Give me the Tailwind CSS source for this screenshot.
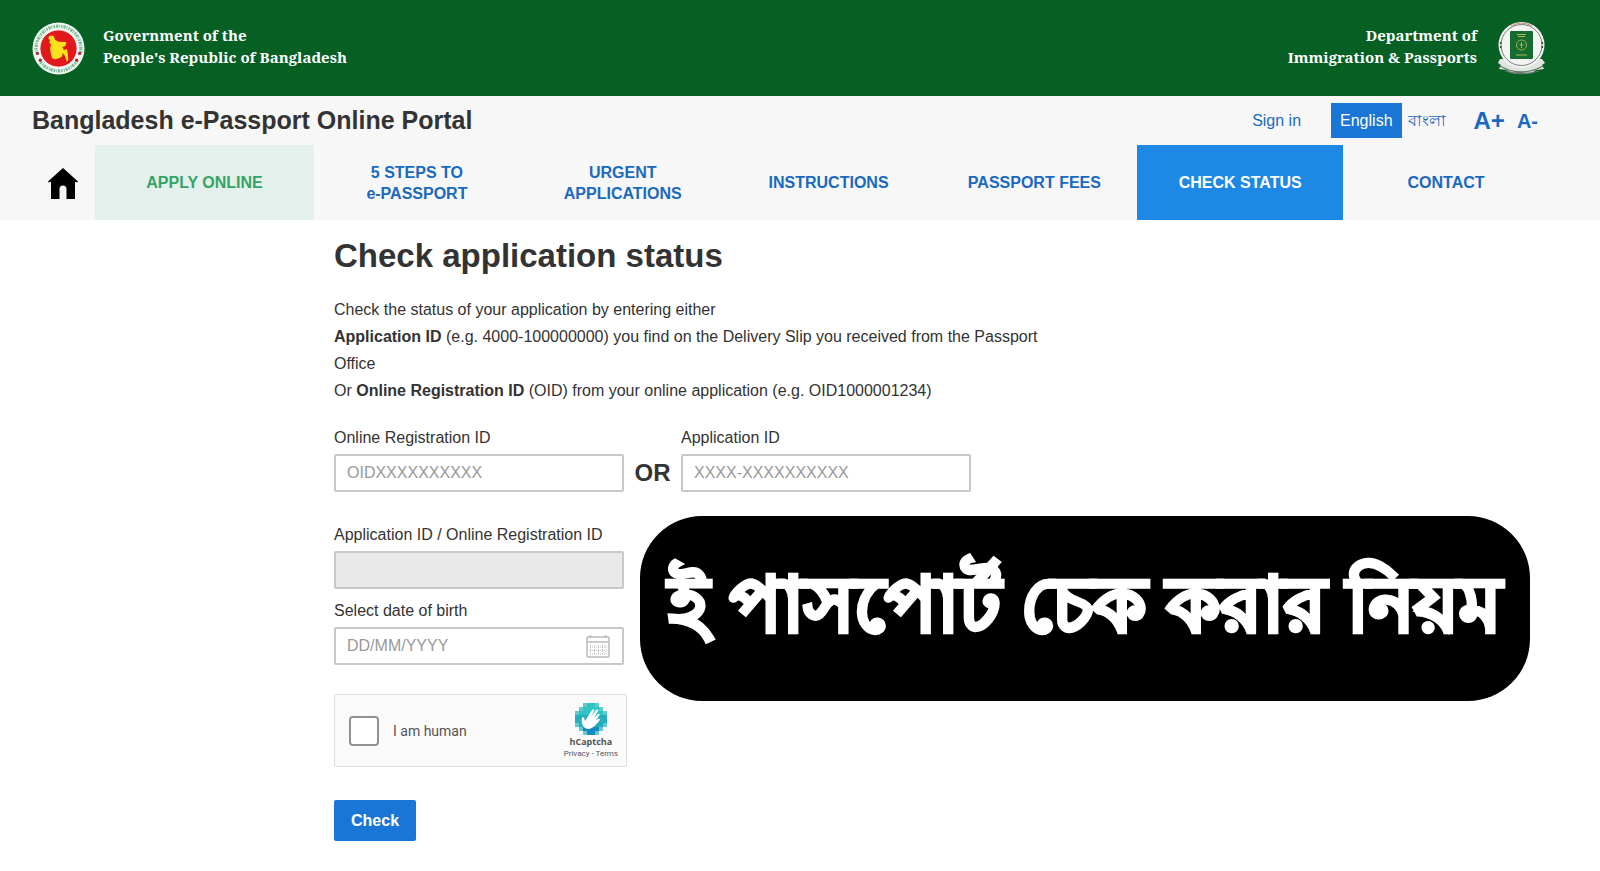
<!DOCTYPE html>
<html lang="en">
<head>
    <meta charset="UTF-8">
    <meta name="viewport" content="width=device-width, initial-scale=1.0">
    <title>Check application status - Bangladesh e-Passport Online Portal</title>
    <script src="https://cdn.jsdelivr.net/npm/@tailwindcss/browser@4"></script>
</head>
<body class="relative min-h-screen bg-white font-['Liberation_Sans',Arial,sans-serif] text-base text-[#333]">
    <!-- Government banner -->
    <header class="flex h-24 items-center justify-between bg-[#066023] pl-8 pr-[54px] font-['Noto_Serif','Liberation_Serif',serif] text-[15px] leading-[22px] font-bold text-white">
        <div class="flex items-center gap-[18px]">
            <svg class="size-[53px]" viewBox="0 0 54 54" aria-hidden="true">
                <circle cx="27" cy="27" r="26.5" fill="#eefaf0" />
                <circle cx="27" cy="27" r="22.8" fill="none" stroke="#3f9467" stroke-width="3.2" stroke-dasharray="1.6 1 2.3 .8 1 1.2" pathLength="144" opacity=".65" />
                <circle cx="27" cy="27" r="19" fill="#e2181d" stroke="#fff" stroke-width="1" />
                <path d="M4 31l4 9M50 31l-4 9" stroke="#eefaf0" stroke-width="5" />
                <g fill="#b8233c">
                    <circle cx="5.500" cy="32" r="1.700" /><circle cx="8.500" cy="39" r="1.700" />
                    <circle cx="48.500" cy="32" r="1.700" /><circle cx="45.500" cy="39" r="1.700" />
                </g>
                <path d="M18 14l4 0 1.500 4 3.500 2 8 .5-1 4-3 1 1.500 3 3-1 1 5 .5 6-1.500 2-2-6-2-3-1 4-3 1.500-4 1-3-1-1.500-6-.5-4.500 1-3-2-3 1-2-2-2z" fill="#fbe21c" />
            </svg>
            <p class="pb-1">Government of the<br>People's Republic of Bangladesh</p>
        </div>
        <div class="flex items-center gap-5 text-right">
            <p class="pb-1">Department of<br>Immigration &amp; Passports</p>
            <svg class="h-[54px] w-[49px]" viewBox="0 0 49 54" aria-hidden="true">
                <path d="M3 38l-2 4 3 2-2 4 8 1 4 3 10 1 11-1 4-3 8-1-2-4 3-2-3-4z" fill="#dfe5df" />
                <path d="M3 45q21 12 43 0M8 50q17 5 34 0" fill="none" stroke="#66776b" stroke-width="1.300" />
                <circle cx="24.500" cy="24" r="23" fill="#f3f5f3" />
                <circle cx="24.500" cy="24" r="20.500" fill="none" stroke="#777d79" stroke-width="1" />
                <circle cx="24.500" cy="24" r="21.800" fill="none" stroke="#bd6f73" stroke-width=".8" stroke-dasharray="22 115" stroke-dashoffset="46" />
                <g fill="#333"><circle cx="3.700" cy="22" r=".9" /><circle cx="3.700" cy="26" r=".9" /><circle cx="45.300" cy="22" r=".9" /><circle cx="45.300" cy="26" r=".9" /></g>
                <rect x="13" y="10" width="23" height="28" rx="1" fill="#166b2f" />
                <g fill="none" stroke="#a8b958">
                    <path d="M20 13.500h9M21 15.500h7M19 34h11" stroke-width="1" />
                    <circle cx="24.500" cy="24" r="5" stroke-width=".9" />
                    <path d="M24.500 21v6M22.500 23l2 2 2-2" stroke-width="1" />
                </g>
            </svg>
        </div>
    </header>

    <div class="bg-[#f7f7f7]">
        <!-- Title and tools -->
        <div class="flex h-[49px] items-center justify-between pl-8 pr-[62px]">
            <p class="text-[25px] font-bold">Bangladesh e-Passport Online Portal</p>
            <div class="flex items-center text-[#1a69c0]">
                <a href="#" class="mr-[30px]">Sign in</a>
                <a href="#" class="flex h-[35px] items-center bg-[#1976d7] px-[9px] text-white">English</a>
                <a href="#" lang="bn" class="ml-1.5">বাংলা</a>
                <button type="button" class="ml-7 text-2xl font-bold">A+</button>
                <button type="button" class="ml-3 text-xl font-bold">A-</button>
            </div>
        </div>

        <!-- Main navigation -->
        <nav class="flex h-[75px] pr-[51px] text-center text-base leading-[21px] font-bold text-[#1a69c0]">
            <a href="#" aria-label="Home" class="flex w-[95px] items-center justify-end pr-4">
                <svg class="size-8" viewBox="0 0 32 32" fill="#000" aria-hidden="true">
                    <path d="M16 1L1 14.500l1 1 2-1V32h8.500V22q0-3.500 3.500-3.500t3.500 3.500v10H28V14.500l2 1 1-1z" />
                </svg>
            </a>
            <a href="#" class="flex w-[219px] items-center justify-center bg-[#e4f0eb] text-[#34a466]">APPLY ONLINE</a>
            <a href="#" class="flex flex-1 items-center justify-center">5 STEPS TO<br>e-PASSPORT</a>
            <a href="#" class="flex flex-1 items-center justify-center">URGENT<br>APPLICATIONS</a>
            <a href="#" class="flex flex-1 items-center justify-center">INSTRUCTIONS</a>
            <a href="#" class="flex flex-1 items-center justify-center">PASSPORT FEES</a>
            <a href="#" class="flex flex-1 items-center justify-center bg-[#1e88e5] text-white" aria-current="page">CHECK STATUS</a>
            <a href="#" class="flex flex-1 items-center justify-center">CONTACT</a>
        </nav>
    </div>

    <main class="mx-auto max-w-[932px] pt-3">
        <h1 class="text-[33px] leading-[48px] font-bold">Check application status</h1>
        <p class="mt-4 max-w-[740px] leading-[27px]">
            Check the status of your application by entering either<br>
            <b>Application ID</b> (e.g. 4000-100000000) you find on the Delivery Slip you received from the Passport Office<br>
            Or <b>Online Registration ID</b> (OID) from your online application (e.g. OID1000001234)
        </p>

        <form class="mt-[18px]">
            <div class="flex items-end">
                <div class="w-[290px]">
                    <label for="oid" class="block leading-8">Online Registration ID</label>
                    <input type="text" id="oid" placeholder="OIDXXXXXXXXXX" class="block h-[38px] w-full rounded-xs border-2 border-[#c8c8c8] px-[11px] placeholder:text-[#999]">
                </div>
                <span class="w-[57px] text-center text-2xl leading-[38px] font-bold">OR</span>
                <div class="w-[290px]">
                    <label for="app-id" class="block leading-8">Application ID</label>
                    <input type="text" id="app-id" placeholder="XXXX-XXXXXXXXXX" class="block h-[38px] w-full rounded-xs border-2 border-[#c8c8c8] px-[11px] placeholder:text-[#999]">
                </div>
            </div>

            <div class="mt-[27px] w-[290px]">
                <label for="any-id" class="block leading-8">Application ID / Online Registration ID</label>
                <input type="text" id="any-id" disabled class="block h-[38px] w-full rounded-xs border-2 border-[#c8c8c8] bg-[#e9e9e9] px-[11px]">
            </div>
            <div class="mt-1.5 w-[290px]">
                <label for="dob" class="block leading-8">Select date of birth</label>
                <div class="flex h-[38px] items-center rounded-xs border-2 border-[#c8c8c8] pr-3 pl-[11px]">
                    <input type="text" id="dob" placeholder="DD/MM/YYYY" class="min-w-0 flex-1 placeholder:text-[#999]">
                    <button type="button" aria-label="Open calendar">
                        <svg class="size-6" viewBox="0 0 24 24" fill="none" stroke="#bbb" aria-hidden="true">
                            <rect x="1" y="3" width="22" height="20" rx="1" stroke-width="1.500" />
                            <path d="M1 8h22M4.500 1v3M19.500 1v3" stroke-width="1.500" />
                            <path d="M4.500 11v9M8.500 11v9M12.500 11v9M16.500 11v9M20 11v9M4 13h16M4 16.500h16M4 20h16" stroke-width="1" stroke-dasharray="1 1" />
                        </svg>
                    </button>
                </div>
            </div>

            <!-- Captcha -->
            <div class="mt-[29px] flex h-[73px] w-[293px] items-center rounded-xs border border-[#ddd] bg-[#fafafa] pl-[14px] pr-2 font-['Roboto',sans-serif] text-[#555]">
                <input type="checkbox" id="human" class="size-[30px] appearance-none rounded-sm border-2 border-[#919191] bg-white">
                <label for="human" class="ml-3.5 text-sm">I am human</label>
                <div class="ml-auto flex flex-col items-center">
                    <svg class="size-8" viewBox="0 0 32 32" aria-hidden="true">
                        <path d="M8 0h16v4h4v4h4v16h-4v4h-4v4H8v-4H4v-4H0V8h4V4h4z" fill="#62c9cd" />
                        <path d="M12 0h8v4h4v4h4v4h4v8h-4v4h-4v4h-4v4h-8v-4H8v-4H4v-4H0v-8h4V8h4V4h4z" fill="#25aebd" />
                        <path d="M12 0h8v4h4v4h4v4H4V8h4V4h4z" fill="#30c4c2" />
                        <path d="M8 24h16v4h-4v4h-8v-4H8z" fill="#1689c1" />
                        <path d="M10 25c-3-2-4-7-3-10 1-2 2-1 3 3l7-11c1-1.500 2.500-.5 2 1l-3 6 5-7c1-1 2.500 0 2 1l-4 7 4-4c1-1 2.300.2 1.500 1.300l-3.500 5 2.500-1.500c1.200-.5 2 .7 1 1.700-5 6-9 10.500-14.500 7.500z" fill="#fff" />
                    </svg>
                    <span class="font-['Open_Sans',sans-serif] text-[9px] leading-[14px] font-bold">hCaptcha</span>
                    <p class="text-[8px] leading-[10px]"><a href="#">Privacy</a> - <a href="#">Terms</a></p>
                </div>
            </div>

            <button type="submit" class="mt-[33px] h-[41px] rounded-xs bg-[#1976d7] px-[17px] text-base font-bold text-white">Check</button>
        </form>
    </main>

    <!-- Caption over the page -->
    <div lang="bn" class="absolute top-[516px] right-[70px] left-[40%] flex h-[185px] items-center justify-center rounded-[62px] bg-black pb-2 text-[76px] leading-none font-black whitespace-nowrap text-white">
        <p class="[-webkit-text-stroke:4px_white]">ই পাসপোর্ট চেক করার নিয়ম</p>
    </div>
</body>
</html>
